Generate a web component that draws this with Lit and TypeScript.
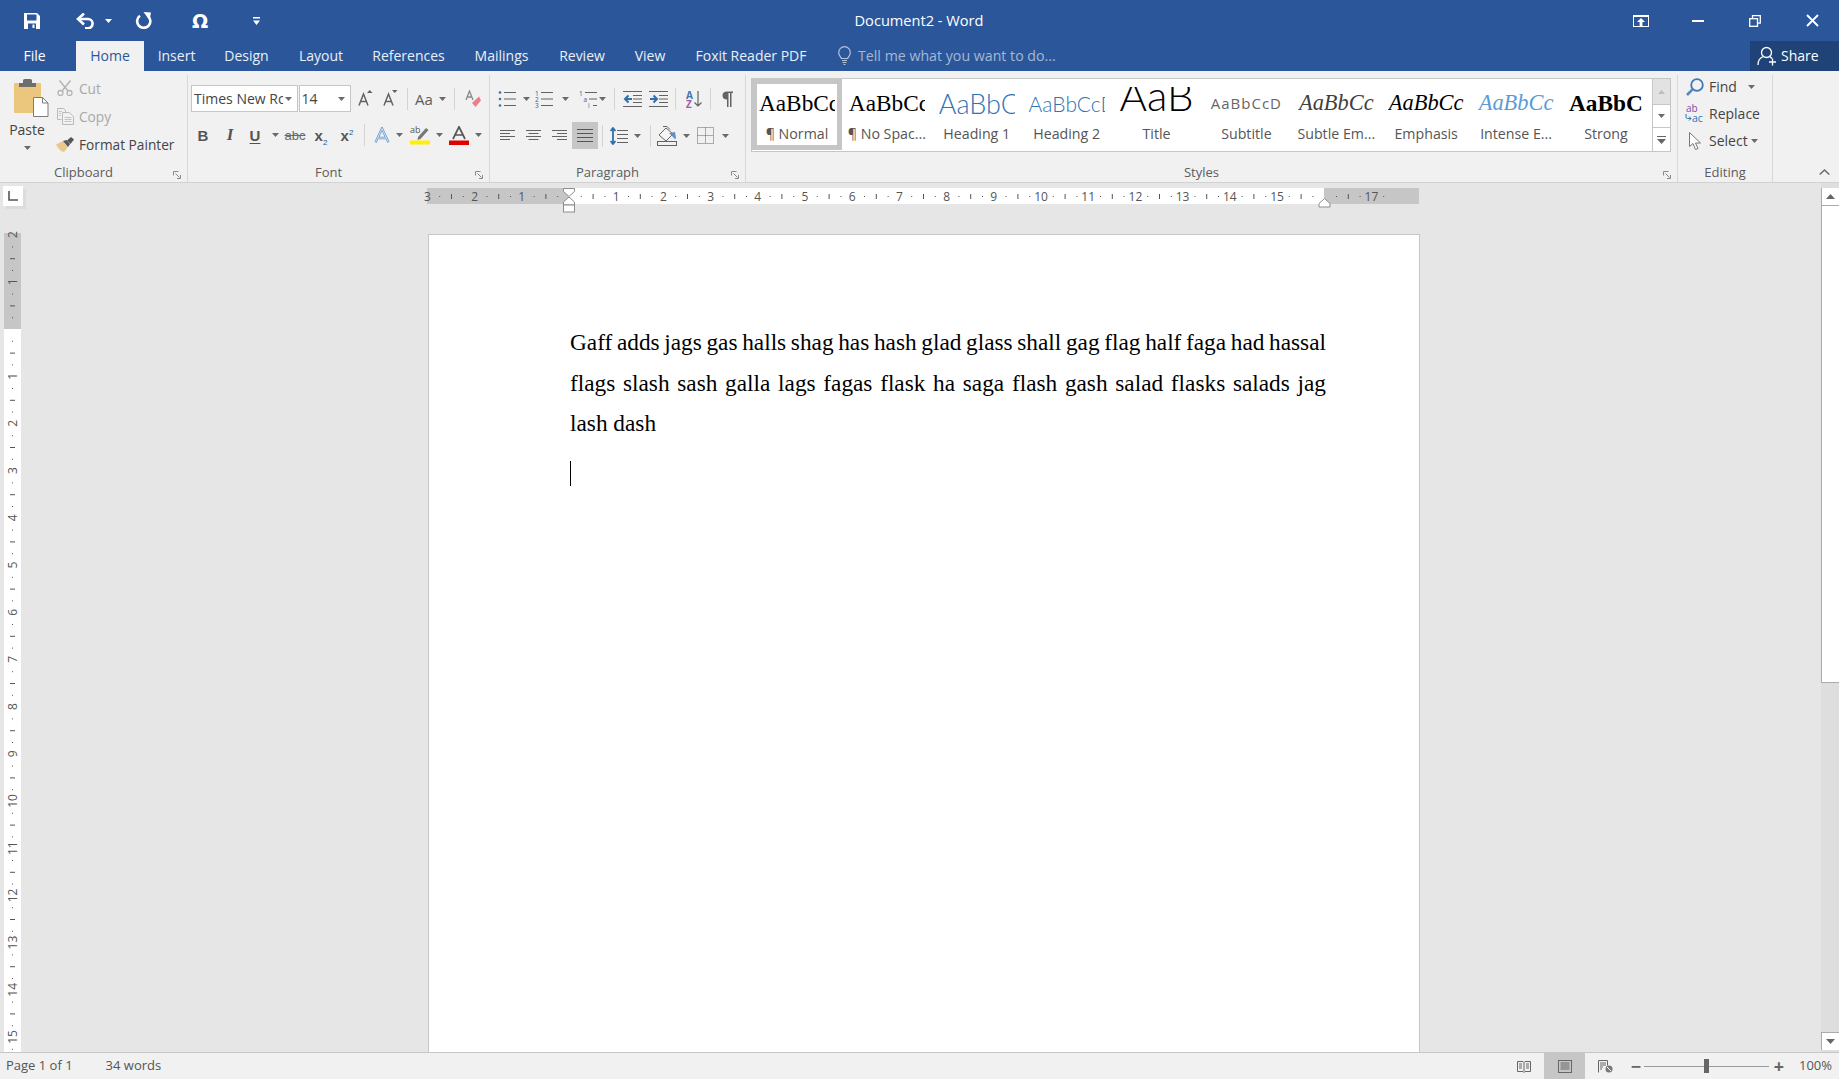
import { LitElement, html, css, svg, TemplateResult } from "lit";
import { customElement } from "lit/decorators.js";

type Item = [number, number, TemplateResult];

const G = "#636363";

const ic = (w: number, h: number, body: unknown) =>
  html`<svg width=${w} height=${h} viewBox="0 0 ${w} ${h}" fill="none" style="display:block">${body}</svg>`;

const arrow = (c = "#6a6a6a") => ic(7, 4, svg`<path d="M0 0h7L3.5 4z" fill=${c}/>`);
const vsep = html`<span class="vsep"></span>`;

// a row of tools placed by centre x: every tool is a flow item, its gap computed from the data
function seq(start: number, items: Item[]) {
  let right = start;
  return items.map(([cx, w, t]) => {
    const left = cx - w / 2;
    const ml = left - right;
    right = left + w;
    return html`<span class="cell" style="margin-left:${ml}px;width:${w}px">${t}</span>`;
  });
}

const icons = {
  save: ic(16, 16, svg`<path fill-rule="evenodd" d="M0 0h13l3 3v13H0zM3 1.600v6h9.500v-6zM4 10.500V16h8v-5.500zM8.500 11.500h2V15h-2z" fill="#fff"/>`),
  undo: ic(19, 16, svg`<path d="M2.500 6H12a4.600 4.600 0 0 1 0 9.200H9" stroke="#fff" stroke-width="2.600"/><path d="M8 .5 2 6l6 5.500" stroke="#fff" stroke-width="2.600"/>`),
  redo: ic(17, 17, svg`<path d="M5 3.800a6.600 6.600 0 1 0 7.500 0" stroke="#fff" stroke-width="2.600"/><path d="M8.500 0l7.500.5-1.500 7.500z" fill="#fff"/>`),
  cust: ic(7, 8, svg`<path d="M0 0h7v1.400H0zM0 3.500h7L3.500 8z" fill="#fff"/>`),
  rdisp: ic(16, 12, svg`<rect x=".5" y=".5" width="15" height="11" stroke="#fff"/><rect x="0" y="0" width="16" height="2" fill="#fff"/><path d="M8 3 4 7h2.600v4h2.800V7H12z" fill="#fff"/>`),
  min: ic(12, 2, svg`<rect width="12" height="2" fill="#fff"/>`),
  rest: ic(12, 12, svg`<path d="M3.500 3V.7h7.800v7.400H8.500" stroke="#fff" stroke-width="1.300"/><rect x=".7" y="3.700" width="7.800" height="7.600" stroke="#fff" stroke-width="1.300"/>`),
  close: ic(13, 13, svg`<path d="M1 1l11 11M12 1 1 12" stroke="#fff" stroke-width="1.900"/>`),
  share: ic(21, 20, svg`<circle cx="9.500" cy="6.500" r="5" stroke="#fff" stroke-width="1.300"/><path d="M1 19c0-4.500 2.500-7.500 5.500-8.500M12.500 10.700c1 .4 1.800 1 2.400 1.800" stroke="#fff" stroke-width="1.300"/><path d="M15.500 12.500v7M12 16h7" stroke="#fff" stroke-width="1.300"/>`),
  bulb: ic(13, 19, svg`<path d="M3.500 12.500C2.500 10.500 .7 9.500 .7 6.500a5.800 5.800 0 0 1 11.600 0c0 3-1.800 4-2.800 6z" stroke="#b4c3dc" stroke-width="1.200"/><path d="M4 14.500h5M4.500 16.500h4M5.500 18.500h2" stroke="#b4c3dc" stroke-width="1.200"/>`),
  paste: ic(35, 38, svg`<rect x="0" y="4" width="27" height="30" rx="1" fill="#ebc77e"/><path d="M5 8V4h4V1.500Q9 0 10.500 0h6Q18 0 18 1.500V4h4v4z" fill="#6e6e6e"/><path d="M19.500 18.500h9l5.500 5.500v13.500H19.500z" fill="#fff" stroke="#7c7c7c"/><path d="M28.500 18.500V24h5.500" stroke="#7c7c7c"/>`),
  cut: ic(16, 16, svg`<path d="M2.500 .5l8.500 10.500M13.500 .5 5 11" stroke="#b4b4b4" stroke-width="1.500"/><circle cx="3.500" cy="13" r="2.500" stroke="#b4b4b4" stroke-width="1.300"/><circle cx="12.500" cy="13" r="2.500" stroke="#b4b4b4" stroke-width="1.300"/>`),
  copy: ic(17, 17, svg`<path d="M.5.500h6l2 2v2M.5.500v11h4" stroke="#b9b9b9"/><path d="M5.500 4.500h7l4 4v8h-11z" fill="#f1f1f1" stroke="#b9b9b9"/><path d="M7.500 9.500h7M7.500 11.500h7M7.500 13.500h7M2 3.500h3M2 5.500h2M2 7.500h2" stroke="#c4c4c4"/>`),
  brush: ic(18, 15, svg`<path d="M0 7.500 7 4l5 6-4 5q-5-1-8-7.500z" fill="#e9c98b"/><path d="M7 4l3.500-1 3.500 4-1.800 3z" fill="#555"/><path d="M11 3.500l4-3.500 3 2.500-3.500 4.500z" fill="#555"/>`),
  launcher: ic(8, 8, svg`<path d="M.5 4.500V.5h5M2.500 2.500l4 4M4 7.500h3.500V4" stroke="#8a8a8a"/>`),
  grow: ic(15, 17, svg`<path d="M1 15.500 5.500 4 10 15.500M2.800 11.500h5.400" stroke=${G} stroke-width="1.500"/><path d="M9 3h5.500L11.750 0z" fill=${G}/>`),
  shrink: ic(15, 17, svg`<path d="M1 15.500 5.500 4 10 15.500M2.800 11.500h5.400" stroke=${G} stroke-width="1.500"/><path d="M9 0h5.500l-2.750 3z" fill=${G}/>`),
  clear: ic(16, 18, svg`<path d="M1 10 4.500 1 8 10M2.200 7h4.600" stroke="#8a8a8a" stroke-width="1.300"/><path d="M7 13l7-6.500 2 4-5.500 6.500z" fill="#ef7c8b"/>`),
  aOutline: ic(16, 17, svg`<path d="M1.500 15.500 8 1.500l6.500 14M4 11h8" stroke="#6d9bd1" stroke-width="2.400"/><path d="M1.500 15.500 8 1.500l6.500 14M4 11h8" stroke="#e9f1fa" stroke-width=".8"/>`),
  highlight: ic(20, 19, svg`<text x="0" y="7" font-size="9" font-family="Open Sans" fill="#555">ab</text><path d="M8 11 16 2l2.500 2-8 9-3 1z" fill="#777"/><rect x="0" y="14.500" width="20" height="4" fill="#ffef00"/>`),
  fcolor: ic(20, 19, svg`<path d="M4 13 10 .8 16 13M6 9h8" stroke="#555" stroke-width="1.700"/><rect x="0" y="14.500" width="20" height="4.500" fill="#e10000"/>`),
  bullets: ic(18, 16, svg`<path d="M6 1.500h12M6 8h12M6 14.500h12" stroke=${G}/><circle cx="2" cy="1.500" r="1.300" fill="#41719c"/><circle cx="2" cy="8" r="1.300" fill="#41719c"/><circle cx="2" cy="14.500" r="1.300" fill="#41719c"/>`),
  numbers: ic(18, 17, svg`<path d="M6 1.500h12M6 8h12M6 14.500h12" stroke=${G}/><text x="0" y="5" font-size="6.500" font-family="Open Sans" fill="#2b579a">1</text><text x="0" y="11" font-size="6.500" font-family="Open Sans" fill="#2b579a">2</text><text x="0" y="17" font-size="6.500" font-family="Open Sans" fill="#2b579a">3</text>`),
  multi: ic(19, 17, svg`<path d="M6 1.500h12M10 8h8M14 14.500h4" stroke=${G}/><text x="0" y="5" font-size="6.500" font-family="Open Sans" fill="#2b579a">1</text><text x="4.500" y="11" font-size="6.500" font-family="Open Sans" fill="#6f4a8e">a</text><text x="9" y="17" font-size="6.500" font-family="Open Sans" fill="#2b579a">i</text>`),
  outdent: ic(19, 16, svg`<path d="M0 .5h19M10 4.500h9M10 8h9M10 11.500h9M0 15.500h19" stroke=${G}/><path d="M9 8H3M5.500 4.500 2 8l3.500 3.500" stroke="#2f6fb0" stroke-width="2"/>`),
  indent: ic(19, 16, svg`<path d="M0 .5h19M10 4.500h9M10 8h9M10 11.500h9M0 15.500h19" stroke=${G}/><path d="M1 8h6M4.500 4.500 8 8l-3.500 3.500" stroke="#2f6fb0" stroke-width="2"/>`),
  sort: ic(17, 18, svg`<text x="0" y="8.500" font-size="10" font-weight="700" font-family="Open Sans" fill="#3a78b5">A</text><text x="0" y="18" font-size="10" font-weight="700" font-family="Open Sans" fill="#a35aa8">Z</text><path d="M12 1v15M8.500 12.500 12 16l3.500-3.500" stroke=${G} stroke-width="1.200"/>`),
  pilcrow: ic(11, 16, svg`<path d="M5 8.500C2 8.500 .5 7 .5 4.500S2 .5 5 .5h6V2H9.500v14H8V2H6.500v14H5z" fill=${G}/>`),
  aleft: ic(15, 11, svg`<path d="M0 .5h15M0 3.500h10M0 6.500h15M0 9.500h10" stroke=${G}/>`),
  acenter: ic(15, 11, svg`<path d="M0 .5h15M2.500 3.500h10M0 6.500h15M2.500 9.500h10" stroke=${G}/>`),
  aright: ic(15, 11, svg`<path d="M0 .5h15M5 3.500h10M0 6.500h15M5 9.500h10" stroke=${G}/>`),
  ajust: ic(16, 13, svg`<path d="M0 .5h16M0 4.500h16M0 8.500h16M0 12.500h16" stroke="#555"/>`),
  lines: ic(18, 18, svg`<path d="M7 3.500h11M7 7.500h11M7 11.500h11M7 15.500h11" stroke=${G}/><path d="M3 1v16M.5 4 3 1l2.500 3M.5 14 3 17l2.500-3" stroke="#2f6fb0" stroke-width="1.800"/>`),
  shade: ic(20, 20, svg`<path d="M2 9 9 2l7 6-7 7z" fill="#f5f5f5" stroke=${G}/><path d="M6 .5h4l3 3" stroke=${G}/><path d="M12 7l6-1 1 6q-1 2-2 0l-2-2z" fill="#5f8ec2"/><rect x=".5" y="15.500" width="19" height="4" fill="#f1f1f1" stroke=${G}/>`),
  borders: ic(17, 17, svg`<path d="M.5.500h16v16H.5zM8.500.500v16M.5 8.500h16" stroke=${G} stroke-dasharray="1 1"/>`),
  find: ic(18, 18, svg`<circle cx="11" cy="7" r="5.800" stroke="#3f76b5" stroke-width="1.800"/><path d="M6.800 11.200 1 17" stroke="#5b87bd" stroke-width="2.600"/>`),
  replace: ic(20, 19, svg`<text x="1" y="8" font-size="10" font-family="Open Sans" fill="#7b4f9d">ab</text><text x="7" y="18" font-size="10.500" font-family="Open Sans" fill="#2e75b6">ac</text><path d="M1 10v3q0 1.500 1.500 1.500H6M4 12.500l2 2-2 2" stroke="#2e75b6"/>`),
  cursor: ic(12, 18, svg`<path d="M.5.500v14l3.500-3 2.500 6 2.500-1-2.500-5.500h5z" fill="#fff" stroke="#777"/>`),
  chev: ic(11, 6, svg`<path d="M.7 5.500 5.500 1l4.800 4.500" stroke="#666" stroke-width="1.400"/>`),
  up: ic(9, 5, svg`<path d="M0 5h9L4.500 0z" fill="#666"/>`),
  down: ic(9, 5, svg`<path d="M0 0h9L4.500 5z" fill="#666"/>`),
  more: ic(9, 8, svg`<path d="M0 0h9v1H0zM0 3h9L4.500 8z" fill="#666"/>`),
  read: ic(14, 13, svg`<path d="M.5 1.500h5.500l1 1 1-1h5.500v10H8l-1 1-1-1H.5zM7 2.500v9M2 4h3M2 6h3M2 8h3M9 4h3M9 6h3M9 8h3" stroke="#666"/>`),
  print: ic(14, 13, svg`<rect x=".5" y=".5" width="13" height="12" stroke="#666"/><path d="M2.500 3h9M2.500 5h9M2.500 7h9M2.500 9h9" stroke="#666"/>`),
  web: ic(15, 13, svg`<path d="M.5 12.500V.5h9v5" stroke="#666"/><path d="M2 3h6M2 5h6M2 7h3M2 9h2" stroke="#666"/><circle cx="11" cy="9" r="3.500" fill="#777"/><path d="M9 7l4 4" stroke="#fff"/>`),
};

const txtIcon = (cls: string, t: string) => html`<span class=${cls}>${t}</span>`;

const TABS: [string, number, boolean?][] = [
  ["File", 76],
  ["Home", 68, true],
  ["Insert", 65],
  ["Design", 75],
  ["Layout", 74],
  ["References", 101],
  ["Mailings", 85],
  ["Review", 76],
  ["View", 60],
  ["Foxit Reader PDF", 142],
];

const STYLES: [string, string, string][] = [
  ["AaBbCc", "¶ Normal", "p-normal"],
  ["AaBbCc", "¶ No Spac...", "p-normal"],
  ["AaBbCc", "Heading 1", "p-h1"],
  ["AaBbCcD", "Heading 2", "p-h2"],
  ["AaB", "Title", "p-title"],
  ["AaBbCcD", "Subtitle", "p-sub"],
  ["AaBbCc", "Subtle Em...", "p-se"],
  ["AaBbCc", "Emphasis", "p-em"],
  ["AaBbCc", "Intense E...", "p-ie"],
  ["AaBbC", "Strong", "p-strong"],
];

const CM = 47.2;

function hRuler() {
  const zero = 142; // offset of the margin inside the ruler
  const parts: unknown[] = [];
  for (let q = -12; q <= 69; q++) {
    const x = zero + (q * CM) / 4;
    if (q === 0 || q === 64) continue;
    if (q % 4 === 0) {
      parts.push(svg`<text x=${x} y="13" text-anchor="middle" class="rt">${Math.abs(q / 4)}</text>`);
    } else if (q % 2 !== 0) {
      parts.push(svg`<rect x=${x} y="8" width="1" height="1" fill="#555"/>`);
    } else {
      parts.push(svg`<rect x=${x} y="6" width="1" height="5" fill="#555"/>`);
    }
  }
  return html`<svg class="hruler" width="992" height="26" viewBox="0 0 992 26">
    <rect x="0" y="0" width="141" height="16" fill="#c6c6c6"/>
    <rect x="141" y="0" width="756" height="16" fill="#fff"/>
    <rect x="897" y="0" width="95" height="16" fill="#c6c6c6"/>
    ${parts}
    <path d="M136.500 .5h11v3l-5.500 5-5.500-5z" fill="#fff" stroke="#8c8c8c"/>
    <path d="M142 9l5.500 5v3h-11v-3z" fill="#fff" stroke="#8c8c8c"/>
    <rect x="136.500" y="17" width="11" height="7" fill="#fff" stroke="#8c8c8c"/>
    <path d="M897.500 10.500l5.500 5v3.500h-11v-3.500z" fill="#fff" stroke="#8c8c8c"/>
  </svg>`;
}

function vRuler() {
  const zero = 96;
  const parts: unknown[] = [];
  for (let q = -8; q <= 62; q++) {
    const y = zero + (q * CM) / 4;
    if (q === 0) continue;
    if (q % 4 === 0) {
      parts.push(svg`<text transform="translate(12.500 ${y}) rotate(-90)" text-anchor="middle" class="rt">${Math.abs(q / 4)}</text>`);
    } else if (q % 2 !== 0) {
      parts.push(svg`<rect x="8" y=${y} width="1" height="1" fill="#555"/>`);
    } else {
      parts.push(svg`<rect x="6" y=${y} width="5" height="1" fill="#555"/>`);
    }
  }
  return html`<svg class="vruler" width="17" height="819" viewBox="0 0 17 819">
    <rect width="17" height="96" fill="#c6c6c6"/>
    <rect y="96" width="17" height="723" fill="#fff"/>
    ${parts}
  </svg>`;
}

@customElement("app-root")
export class AppRoot extends LitElement {
  static styles = css`
    :host {
      display: flex;
      flex-direction: column;
      width: 1839px;
      height: 1079px;
      overflow: hidden;
      background: #e6e6e6;
      font-family: "Open Sans", "Noto Sans", sans-serif;
      font-size: 14px;
      color: #444;
      --blue: #2b579a;
    }
    svg { flex: none; }
    .rt { font-family: "Open Sans", sans-serif; font-size: 12px; fill: #555; }

    /* title bar */
    .titlebar {
      position: relative;
      height: 41px;
      background: var(--blue);
      display: flex;
      align-items: center;
      color: #fff;
      flex: none;
    }
    .title {
      position: absolute;
      left: 0;
      right: 1px;
      top: 9px;
      text-align: center;
      font-size: 14.600px;
      line-height: 22px;
    }
    .omega { font-family: "DejaVu Sans", sans-serif; font-size: 19px; font-weight: 700; line-height: 20px; color: #fff; }
    .cell {
      flex: none;
      display: flex;
      align-items: center;
      justify-content: center;
      white-space: nowrap;
    }

    /* tabs */
    .tabs {
      height: 30px;
      background: var(--blue);
      display: flex;
      align-items: stretch;
      flex: none;
      color: #fff;
      font-size: 14px;
    }
    .tab { display: flex; align-items: center; justify-content: center; flex: none; padding-bottom: 1px; box-sizing: border-box; color: #eaeff7; }
    .tab:first-child { padding-right: 7px; color: #fff; }
    .tab.active { background: #f1f1f1; color: var(--blue); }
    .tell { display: flex; align-items: center; gap: 7px; margin-left: 16px; color: #a5b7d4; font-size: 14.200px; padding-bottom: 1px; }
    .share {
      margin-left: auto;
      width: 89px;
      background: #204377;
      display: flex;
      align-items: center;
      gap: 3px;
      padding: 0 0 1px 7px;
      box-sizing: border-box;
    }

    /* ribbon */
    .ribbon {
      height: 112px;
      flex: none;
      box-sizing: border-box;
      background: #f1f1f1;
      border-bottom: 1px solid #d2d2d2;
      display: flex;
      position: relative;
    }
    .group {
      position: relative;
      flex: none;
      height: 107px;
      margin-top: 4px;
      box-sizing: border-box;
      border-right: 1px solid #d8d8d8;
      display: flex;
      flex-direction: column;
    }
    .glabel {
      position: absolute;
      bottom: 0;
      left: 0;
      right: 0;
      height: 20px;
      line-height: 20px;
      text-align: center;
      font-size: 13px;
      color: #5c5c5c;
    }
    .glabel.l { right: 20px; }
    .launch { position: absolute; right: 6px; bottom: 3px; }
    .row { display: flex; align-items: center; position: absolute; left: 0; right: 0; }

    .paste {
      position: absolute;
      left: 14px;
      top: 4px;
      width: 36px;
    }
    .pastetext {
      position: absolute;
      left: 0;
      width: 54px;
      top: 45px;
      text-align: center;
      font-size: 14px;
      line-height: 20px;
      color: #444;
    }
    .pastearrow { position: absolute; left: 24px; top: 71px; }
    .cb { position: absolute; left: 57px; top: -1px; display: flex; flex-direction: column; }
    .cbrow { display: flex; align-items: center; height: 28px; gap: 6px; font-size: 13.700px; white-space: nowrap; }
    .cbrow .i { width: 16px; display: flex; justify-content: center; }
    .dis { color: #a8a8a8; }

    .fname {
      box-sizing: border-box;
      height: 27px;
      background: #fff;
      border: 1px solid #c6c6c6;
      display: flex;
      align-items: center;
      font-size: 14px;
      position: relative;
      color: #444;
      white-space: nowrap;
      padding-left: 2px;
    }
    .fname .nm { width: 89px; overflow: hidden; flex: none; }
    .fname .arr { position: absolute; right: 5px; top: 11px; display: flex; }
    .vsep { display: block; width: 1px; height: 22px; background: #d4d4d4; }
    .tb { font-family: "Liberation Sans", sans-serif; font-size: 15px; color: #555; font-weight: 700; }
    .tbi { font-family: "Liberation Serif", serif; font-size: 17px; font-style: italic; font-weight: 700; color: #555; }
    .tu { font-family: "Liberation Sans", sans-serif; font-size: 15px; color: #555; font-weight: 700; text-decoration: underline; text-decoration-color: #2b579a; text-underline-offset: 2px; }
    .tabc { font-family: "Liberation Sans", sans-serif; font-size: 13px; color: #6a6a6a; text-decoration: line-through; }
    .tx { font-family: "Liberation Sans", sans-serif; font-size: 15px; color: #555; font-weight: 700; }
    .tx sub, .tx sup { font-size: 8px; font-weight: 400; color: #2b579a; line-height: 0; }
    .taa { font-size: 15px; color: #5c5c5c; }

    .active-btn { background: #c6c6c6; width: 26px; height: 27px; display: flex; align-items: center; justify-content: center; }

    /* gallery */
    .gallery {
      position: absolute;
      left: 5px;
      top: 3px;
      width: 920px;
      height: 74px;
      box-sizing: border-box;
      background: #fff;
      border: 1px solid #c6c6c6;
      display: flex;
    }
    .sitem {
      flex: none;
      width: 89.900px;
      box-sizing: border-box;
      height: 72px;
      display: flex;
      flex-direction: column;
      align-items: center;
      text-align: center;
    }
    .sitem.sel { border: 5px solid #c6c6c6; height: 71px; }
    .prev {
      height: 36px;
      margin-top: 6px;
      width: 76px;
      overflow: hidden;
      white-space: nowrap;
      display: flex;
      align-items: center;
      color: #000;
      flex: none;
    }
    .prev span { margin: 0 auto; flex: none; }
    .sitem.sel .prev { margin-top: 1px; }
    .sname { font-size: 14.200px; line-height: 18px; color: #555; white-space: nowrap; margin-top: 4px; }
    .p-normal { font-family: "Liberation Serif", serif; font-size: 23.300px; }
    .p-h1 { font-family: Lato, sans-serif; font-weight: 300; font-size: 27px; color: #2e74b5; }
    .p-h2 { font-family: Lato, sans-serif; font-weight: 300; font-size: 21px; color: #2e74b5; }
    .prev .p-title { font-family: Lato, sans-serif; font-weight: 300; font-size: 42px; line-height: 17px; height: 26px; overflow: hidden; color: #000; display: block; position: relative; top: -3px; }
    .p-sub { font-family: "Open Sans", sans-serif; font-size: 15px; letter-spacing: 1px; color: #666; }
    .p-se { font-family: "Liberation Serif", serif; font-style: italic; font-size: 22.400px; color: #404040; }
    .p-em { font-family: "Liberation Serif", serif; font-style: italic; font-size: 22.400px; color: #000; }
    .p-ie { font-family: "Liberation Serif", serif; font-style: italic; font-size: 22.400px; color: #5b9bd5; }
    .p-strong { font-family: "Liberation Serif", serif; font-weight: 700; font-size: 23.300px; color: #000; }
    .gscroll { display: flex; flex-direction: column; width: 17px; margin-left: auto; flex: none; border-left: 1px solid #c6c6c6; }
    .gs { display: flex; align-items: center; justify-content: center; border-bottom: 1px solid #c6c6c6; box-sizing: border-box; }
    .gs.dis1 { height: 26px; background: #e2e2e2; }
    .gs.m { height: 23px; }
    .gs.l { height: 23px; border-bottom: 0; }
    .edrow { display: flex; align-items: center; gap: 3px; position: absolute; left: 6px; font-size: 14px; white-space: nowrap; }
    .edrow .i { width: 22px; display: flex; justify-content: center; flex: none; }
    .collapse { position: absolute; right: 9px; bottom: 7px; }

    /* workspace */
    .work { flex: 1; display: flex; min-height: 0; }
    .main { flex: 1; min-width: 0; display: flex; flex-direction: column; }
    .toprow { height: 51px; flex: none; display: flex; align-items: flex-start; }
    .tabsel { width: 20px; height: 20px; background: #fff; margin: 3px 0 0 3px; box-shadow: 3px 3px 0 #dcdcdc; display: flex; align-items: center; justify-content: center; flex: none; }
    .hruler { margin: 5px 0 0 404px; overflow: visible; }
    .body { flex: 1; display: flex; align-items: flex-start; min-height: 0; }
    .vruler { margin: -1px 0 0 4px; flex: none; overflow: visible; }
    .page {
      margin-left: 407px;
      width: 992px;
      height: 900px;
      flex: none;
      box-sizing: border-box;
      background: #fff;
      border: 1px solid #c6c6c6;
      padding: 87px 93px 0 141px;
      font-family: "Liberation Serif", serif;
      font-size: 23.300px;
      line-height: 40.500px;
      color: #000;
    }
    .ln { white-space: nowrap; text-align: justify; text-align-last: justify; }
    .ln.tight { word-spacing: -2.500px; }
    .ln.last { text-align: left; text-align-last: left; }
    .caret { width: 1px; height: 25px; background: #000; margin-top: 17px; }

    .scroll { width: 18px; flex: none; display: flex; flex-direction: column; background: #dedede; }
    .sb { height: 18px; display: flex; align-items: center; justify-content: center; background: #fff; flex: none; box-sizing: border-box; border-left: 1px solid #ababab; }
    .sb.top { margin-top: 5px; border-bottom: 1px solid #ababab; }
    .thumb { height: 477px; background: #fff; flex: none; box-sizing: border-box; border-left: 1px solid #ababab; border-bottom: 1px solid #ababab; }
    .sb.bottom { margin-top: auto; margin-bottom: 2px; border-top: 1px solid #ababab; }

    /* status */
    .status {
      height: 27px;
      flex: none;
      box-sizing: border-box;
      background: #f1f1f1;
      border-top: 1px solid #c6c6c6;
      display: flex;
      align-items: center;
      font-size: 13px;
      color: #555;
    }
    .status .pg { margin-left: 6px; padding-bottom: 3px; }
    .status .wd { margin-left: 33px; padding-bottom: 3px; }
    .views { margin-left: auto; display: flex; align-items: center; height: 100%; }
    .view { width: 41px; height: 100%; display: flex; align-items: center; justify-content: center; }
    .view.on { background: #c6c6c6; }
    .slider { width: 125px; height: 1px; background: #9a9a9a; position: relative; }
    .knob { position: absolute; left: 60px; top: -7px; width: 5px; height: 14px; background: #666; }
    .pm { font-size: 18px; color: #666; font-weight: 700; width: 16px; text-align: center; line-height: 20px; }
    .pm.minus { margin-left: 2px; }
    .pm.plus { margin-left: 2px; }
    .pct { width: 52px; box-sizing: border-box; text-align: right; padding: 0 7px 3px 0; font-size: 13px; }
  `;

  render() {
    return html`
      ${this.titlebar()}
      ${this.tabs()}
      ${this.ribbon()}
      ${this.work()}
      ${this.status()}
    `;
  }

  titlebar() {
    return html`<div class="titlebar">
      <div class="title">Document2 - Word</div>
      ${seq(0, [
        [32, 16, icons.save],
        [85, 19, icons.undo],
        [108, 7, arrow("#fff")],
        [143, 17, icons.redo],
        [200, 20, txtIcon("omega", "Ω")],
        [256, 7, icons.cust],
        [1641, 16, icons.rdisp],
        [1698, 12, icons.min],
        [1755, 12, icons.rest],
        [1812, 13, icons.close],
      ])}
    </div>`;
  }

  tabs() {
    return html`<div class="tabs">
      ${TABS.map(
        ([t, w, a]) => html`<div class="tab ${a ? "active" : ""}" style="width:${w}px">${t}</div>`
      )}
      <div class="tell">${icons.bulb}<span>Tell me what you want to do...</span></div>
      <div class="share">${icons.share}<span>Share</span></div>
    </div>`;
  }

  ribbon() {
    return html`<div class="ribbon">
      ${this.clipboard()} ${this.font()} ${this.para()} ${this.stylesGroup()} ${this.editing()}
      <div class="collapse">${icons.chev}</div>
    </div>`;
  }

  clipboard() {
    return html`<div class="group" style="width:188px">
      <div class="paste">${icons.paste}</div>
      <div class="pastetext">Paste</div>
      <div class="pastearrow">${arrow()}</div>
      <div class="cb">
        <div class="cbrow dis"><span class="i">${icons.cut}</span>Cut</div>
        <div class="cbrow dis"><span class="i">${icons.copy}</span>Copy</div>
        <div class="cbrow"><span class="i">${icons.brush}</span>Format Painter</div>
      </div>
      <div class="glabel l">Clipboard</div>
      <div class="launch">${icons.launcher}</div>
    </div>`;
  }

  font() {
    const o = 188;
    const c = (x: number) => x - o;
    return html`<div class="group" style="width:302px">
      <div class="row" style="top:10px">
        ${seq(0, [
          [c(244.5), 107, html`<div class="fname" style="width:107px"><span class="nm">Times New Roman</span><span class="arr">${arrow()}</span></div>`],
          [c(324.5), 52, html`<div class="fname" style="width:52px">14<span class="arr">${arrow()}</span></div>`],
          [c(365), 15, icons.grow],
          [c(390), 15, icons.shrink],
          [c(407.5), 1, vsep],
          [c(424), 20, txtIcon("taa", "Aa")],
          [c(442), 7, arrow()],
          [c(454.5), 1, vsep],
          [c(473), 16, icons.clear],
        ])}
      </div>
      <div class="row" style="top:49px">
        ${seq(0, [
          [c(203), 12, txtIcon("tb", "B")],
          [c(230), 12, txtIcon("tbi", "I")],
          [c(255), 12, txtIcon("tu", "U")],
          [c(275), 7, arrow()],
          [c(295), 22, txtIcon("tabc", "abc")],
          [c(321), 18, html`<span class="tx">x<sub>2</sub></span>`],
          [c(347), 18, html`<span class="tx">x<sup>2</sup></span>`],
          [c(364.5), 1, vsep],
          [c(382), 16, icons.aOutline],
          [c(399), 7, arrow()],
          [c(420), 20, icons.highlight],
          [c(439), 7, arrow()],
          [c(459), 20, icons.fcolor],
          [c(478), 7, arrow()],
        ])}
      </div>
      <div class="glabel l">Font</div>
      <div class="launch">${icons.launcher}</div>
    </div>`;
  }

  para() {
    const o = 490;
    const c = (x: number) => x - o;
    return html`<div class="group" style="width:256px">
      <div class="row" style="top:13px">
        ${seq(0, [
          [c(507), 18, icons.bullets],
          [c(526), 7, arrow()],
          [c(544), 18, icons.numbers],
          [c(565), 7, arrow()],
          [c(588), 19, icons.multi],
          [c(602), 7, arrow()],
          [c(614.5), 1, vsep],
          [c(632), 19, icons.outdent],
          [c(658), 19, icons.indent],
          [c(675.5), 1, vsep],
          [c(694), 17, icons.sort],
          [c(710.5), 1, vsep],
          [c(727), 11, icons.pilcrow],
        ])}
      </div>
      <div class="row" style="top:47px">
        ${seq(0, [
          [c(507), 15, icons.aleft],
          [c(533), 15, icons.acenter],
          [c(559), 15, icons.aright],
          [c(585), 26, html`<span class="active-btn">${icons.ajust}</span>`],
          [c(602.5), 1, vsep],
          [c(619), 18, icons.lines],
          [c(637), 7, arrow()],
          [c(650), 1, vsep],
          [c(667), 20, icons.shade],
          [c(686), 7, arrow()],
          [c(705), 17, icons.borders],
          [c(725), 7, arrow()],
        ])}
      </div>
      <div class="glabel l">Paragraph</div>
      <div class="launch">${icons.launcher}</div>
    </div>`;
  }

  stylesGroup() {
    return html`<div class="group" style="width:932px">
      <div class="gallery">
        ${STYLES.map(
          ([p, n, cls], i) => html`<div class="sitem ${i === 0 ? "sel" : ""}">
            <div class="prev"><span class=${cls}>${p}</span></div>
            <div class="sname">${n}</div>
          </div>`
        )}
        <div class="gscroll">
          <div class="gs dis1">${ic(7, 4, svg`<path d="M0 4h7L3.500 0z" fill="#bcbcbc"/>`)}</div>
          <div class="gs m">${arrow()}</div>
          <div class="gs l">${icons.more}</div>
        </div>
      </div>
      <div class="glabel l">Styles</div>
      <div class="launch">${icons.launcher}</div>
    </div>`;
  }

  editing() {
    return html`<div class="group" style="width:95px">
      <div class="edrow" style="top:2px"><span class="i">${icons.find}</span>Find<span style="margin-left:8px">${arrow()}</span></div>
      <div class="edrow" style="top:29px"><span class="i">${icons.replace}</span>Replace</div>
      <div class="edrow" style="top:56px"><span class="i">${icons.cursor}</span>Select<span style="margin-left:0">${arrow()}</span></div>
      <div class="glabel">Editing</div>
    </div>`;
  }

  work() {
    return html`<div class="work">
      <div class="main">
        <div class="toprow">
          <div class="tabsel">${ic(10, 10, svg`<path d="M1 0v9h9" stroke="#555" stroke-width="1.600"/>`)}</div>
          ${hRuler()}
        </div>
        <div class="body">
          ${vRuler()}
          <div class="page">
            <div class="ln tight">Gaff adds jags gas halls shag has hash glad glass shall gag flag half faga had hassal</div>
            <div class="ln">flags slash sash galla lags fagas flask ha saga flash gash salad flasks salads jag</div>
            <div class="ln last">lash dash</div>
            <div class="caret"></div>
          </div>
        </div>
      </div>
      <div class="scroll">
        <div class="sb top">${icons.up}</div>
        <div class="thumb"></div>
        <div class="sb bottom">${icons.down}</div>
      </div>
    </div>`;
  }

  status() {
    return html`<div class="status">
      <span class="pg">Page 1 of 1</span>
      <span class="wd">34 words</span>
      <div class="views">
        <span class="view">${icons.read}</span>
        <span class="view on">${icons.print}</span>
        <span class="view">${icons.web}</span>
        <span class="pm minus">−</span>
        <span class="slider"><span class="knob"></span></span>
        <span class="pm plus">+</span>
        <span class="pct">100%</span>
      </div>
    </div>`;
  }
}
